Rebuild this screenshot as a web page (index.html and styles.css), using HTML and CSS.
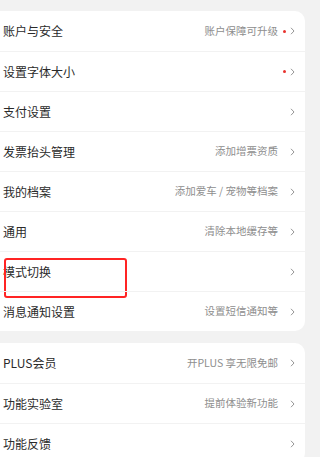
FILE: index.html
```html
<!DOCTYPE html>
<html lang="zh-CN">
<head>
<meta charset="utf-8">
<title>设置</title>
<link rel="stylesheet" href="styles.css">
</head>
<body>
<div class="page">
  <div class="card">
    <div class="row"><span class="title">账户与安全</span><span class="extra"><span class="sub">账户保障可升级</span><span class="dot"></span><svg class="chev" viewBox="0 0 5 8"><path d="M1 0.8 L4 4 L1 7.2"/></svg></span></div>
    <div class="row"><span class="title">设置字体大小</span><span class="extra"><span class="dot"></span><svg class="chev" viewBox="0 0 5 8"><path d="M1 0.8 L4 4 L1 7.2"/></svg></span></div>
    <div class="row"><span class="title">支付设置</span><span class="extra"><svg class="chev" viewBox="0 0 5 8"><path d="M1 0.8 L4 4 L1 7.2"/></svg></span></div>
    <div class="row"><span class="title">发票抬头管理</span><span class="extra"><span class="sub">添加增票资质</span><svg class="chev" viewBox="0 0 5 8"><path d="M1 0.8 L4 4 L1 7.2"/></svg></span></div>
    <div class="row"><span class="title">我的档案</span><span class="extra"><span class="sub">添加爱车 / 宠物等档案</span><svg class="chev" viewBox="0 0 5 8"><path d="M1 0.8 L4 4 L1 7.2"/></svg></span></div>
    <div class="row"><span class="title">通用</span><span class="extra"><span class="sub">清除本地缓存等</span><svg class="chev" viewBox="0 0 5 8"><path d="M1 0.8 L4 4 L1 7.2"/></svg></span></div>
    <div class="row marked"><span class="title">模式切换</span><span class="extra"><svg class="chev" viewBox="0 0 5 8"><path d="M1 0.8 L4 4 L1 7.2"/></svg></span><span class="highlight"></span></div>
    <div class="row"><span class="title">消息通知设置</span><span class="extra"><span class="sub">设置短信通知等</span><svg class="chev" viewBox="0 0 5 8"><path d="M1 0.8 L4 4 L1 7.2"/></svg></span></div>
  </div>
  <div class="card">
    <div class="row"><span class="title">PLUS会员</span><span class="extra"><span class="sub">开PLUS 享无限免邮</span><svg class="chev" viewBox="0 0 5 8"><path d="M1 0.8 L4 4 L1 7.2"/></svg></span></div>
    <div class="row"><span class="title">功能实验室</span><span class="extra"><span class="sub">提前体验新功能</span><svg class="chev" viewBox="0 0 5 8"><path d="M1 0.8 L4 4 L1 7.2"/></svg></span></div>
    <div class="row"><span class="title">功能反馈</span><span class="extra"><svg class="chev" viewBox="0 0 5 8"><path d="M1 0.8 L4 4 L1 7.2"/></svg></span></div>
  </div>
</div>
</body>
</html>
```

FILE: styles.css
```css
html, body {
  margin: 0;
  padding: 0;
  background: #f2f2f2;
}
body {
  font-family: "Noto Sans CJK SC", "Noto Sans", sans-serif;
  overflow: hidden;
}
.page {
  width: 312px;
  padding-top: 11px;
  display: flex;
  flex-direction: column;
  gap: 12px;
}
.card {
  width: 305px;
  background: #ffffff;
  border-radius: 0 10px 10px 0;
}
.row {
  position: relative;
  height: 40px;
  display: flex;
  align-items: center;
  justify-content: space-between;
  padding: 0 10px 0 3px;
  border-top: 1px solid #f2f2f2;
  box-sizing: border-box;
}
.row:first-child {
  border-top: none;
}
.title {
  font-size: 12px;
  color: #2a2a2a;
  line-height: 1;
}
.extra {
  display: flex;
  align-items: center;
}
.sub {
  font-size: 10.5px;
  color: #8e8e8e;
  line-height: 1;
  margin-right: 12px;
}
.dot + .chev {
  margin-left: 4px;
}
.sub + .dot {
  margin-left: -7px;
}
.dot {
  width: 3px;
  height: 3px;
  border-radius: 50%;
  background: #e8322d;
}
.chev {
  width: 5px;
  height: 8px;
  fill: none;
  stroke: #8a8a8a;
  stroke-width: 0.9;
}
.highlight {
  position: absolute;
  left: 4px;
  top: 6px;
  width: 123px;
  height: 40px;
  border: 2px solid #ff2424;
  border-radius: 3px;
  box-sizing: border-box;
}
```
